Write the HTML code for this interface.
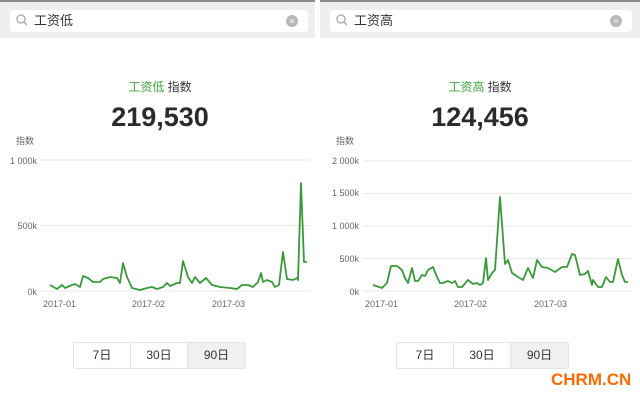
<!DOCTYPE html>
<html><head><meta charset="utf-8"><style>
*{margin:0;padding:0;box-sizing:border-box}
body{width:640px;height:400px;background:#fff;position:relative;overflow:hidden;font-family:"Liberation Sans","Noto Sans CJK SC",sans-serif;color:#333}
.bar{position:absolute;top:0;height:38px;background:#efeff0;border-top:2px solid #8a8a8a}
.sb{position:absolute;top:8px;height:22px;background:#fff;border-radius:4px;font-size:13px;line-height:22px;padding-left:24px}
.sb svg{position:absolute;left:6px;top:4px}
.x{position:absolute;right:10px;top:5px;width:12px;height:12px;border-radius:50%;background:#b8b8b8;color:#fff;font-size:9px;line-height:12px;text-align:center}
.t{position:absolute;width:320px;text-align:center;font-size:12px}
.g{color:#3fa33f}
.n{position:absolute;width:320px;text-align:center;font-size:27px;font-weight:bold;color:#2b2b2b}
.lab{position:absolute;font-size:9px;color:#666}
.btn{position:absolute;top:342px;height:27px;display:flex;border:1px solid #e4e4e4;border-radius:2px;font-size:12px}
.btn div{width:57px;text-align:center;line-height:25px;border-right:1px solid #e4e4e4}
.btn div:last-child{border:0;background:#f0f0f0}
</style></head><body>
<div class="bar" style="left:0;width:315px"><div class="sb" style="left:10px;width:298px"><svg width="12" height="12"><circle cx="5" cy="5" r="4" fill="none" stroke="#aaa" stroke-width="1.3"/><line x1="8" y1="8" x2="11" y2="11" stroke="#aaa" stroke-width="1.3"/></svg>工资低<div class="x">×</div></div></div>
<div class="bar" style="left:320px;width:320px"><div class="sb" style="left:10px;width:302px"><svg width="12" height="12"><circle cx="5" cy="5" r="4" fill="none" stroke="#aaa" stroke-width="1.3"/><line x1="8" y1="8" x2="11" y2="11" stroke="#aaa" stroke-width="1.3"/></svg>工资高<div class="x">×</div></div></div>

<div class="t" style="left:0;top:78px"><span class="g">工资低</span> 指数</div>
<div class="t" style="left:320px;top:78px"><span class="g">工资高</span> 指数</div>
<div class="n" style="left:0;top:102px">219,530</div>
<div class="n" style="left:320px;top:102px">124,456</div>
<div class="lab" style="left:16px;top:134px">指数</div>
<div class="lab" style="left:336px;top:134px">指数</div>

<svg style="position:absolute;left:0;top:0" width="640" height="400">
<g stroke="#e8e8e8" stroke-width="1">
<line x1="40" y1="160" x2="310" y2="160"/><line x1="40" y1="225.5" x2="310" y2="225.5"/><line x1="40" y1="291" x2="310" y2="291"/>
<line x1="363" y1="161" x2="632" y2="161"/><line x1="363" y1="193.5" x2="632" y2="193.5"/><line x1="363" y1="226" x2="632" y2="226"/><line x1="363" y1="258.5" x2="632" y2="258.5"/><line x1="363" y1="291" x2="632" y2="291"/>
</g>
<g font-size="9" fill="#666" font-family="Liberation Sans,sans-serif" text-anchor="end">
<text x="37" y="164">1 000k</text><text x="37" y="229">500k</text><text x="37" y="295">0k</text>
<text x="359" y="164">2 000k</text><text x="359" y="196">1 500k</text><text x="359" y="229">1 000k</text><text x="359" y="262">500k</text><text x="359" y="295">0k</text>
</g>
<g font-size="9" fill="#666" font-family="Liberation Sans,sans-serif">
<text x="43" y="307">2017-01</text><text x="132" y="307">2017-02</text><text x="212" y="307">2017-03</text>
<text x="365" y="307">2017-01</text><text x="454" y="307">2017-02</text><text x="534" y="307">2017-03</text>
</g>
<g fill="none" stroke="#3a9a3a" stroke-width="1.8" stroke-linejoin="round">
<polyline points="50,285 57,289 62,285 65,288 72,285 75,284 80,287 83,276 88,278 93,282 100,282 103,279 110,277 117,278 120,283 123,263 127,277 132,288 140,290 147,288 152,287 157,289 163,287 167,283 170,286 177,283 180,283 183,261 188,277 192,283 195,277 200,283 206,278 212,285 220,287 230,288 237,289 242,285 248,285 253,287 258,282 261,273 263,282 267,280 272,282 275,287 279,285 283,252 287,279 293,280 297,278 298,280 301,183 304,262 307,262"/>
<polyline points="373,285 382,288 387,283 391,266 397,266 402,270 405,278 408,283 412,268 415,281 418,281 422,275 425,276 428,270 433,267 437,277 440,283 443,283 448,281 452,283 455,281 458,287 462,287 468,280 473,284 477,283 480,285 483,283 486,258 488,280 492,273 495,270 500,197 505,264 508,260 512,273 518,277 523,280 528,268 533,278 537,260 542,267 548,268 555,272 562,267 567,267 572,254 575,255 580,275 585,274 588,271 592,285 593,280 598,287 602,287 606,277 610,282 613,282 618,259 622,275 625,282 628,282"/>
</g>
</svg>

<div class="btn" style="left:73px"><div>7日</div><div>30日</div><div>90日</div></div>
<div class="btn" style="left:396px"><div>7日</div><div>30日</div><div>90日</div></div>
<div style="position:absolute;left:551px;top:370px;font-size:17px;font-weight:bold;color:#ff6a00">CHRM.CN</div>
</body></html>
